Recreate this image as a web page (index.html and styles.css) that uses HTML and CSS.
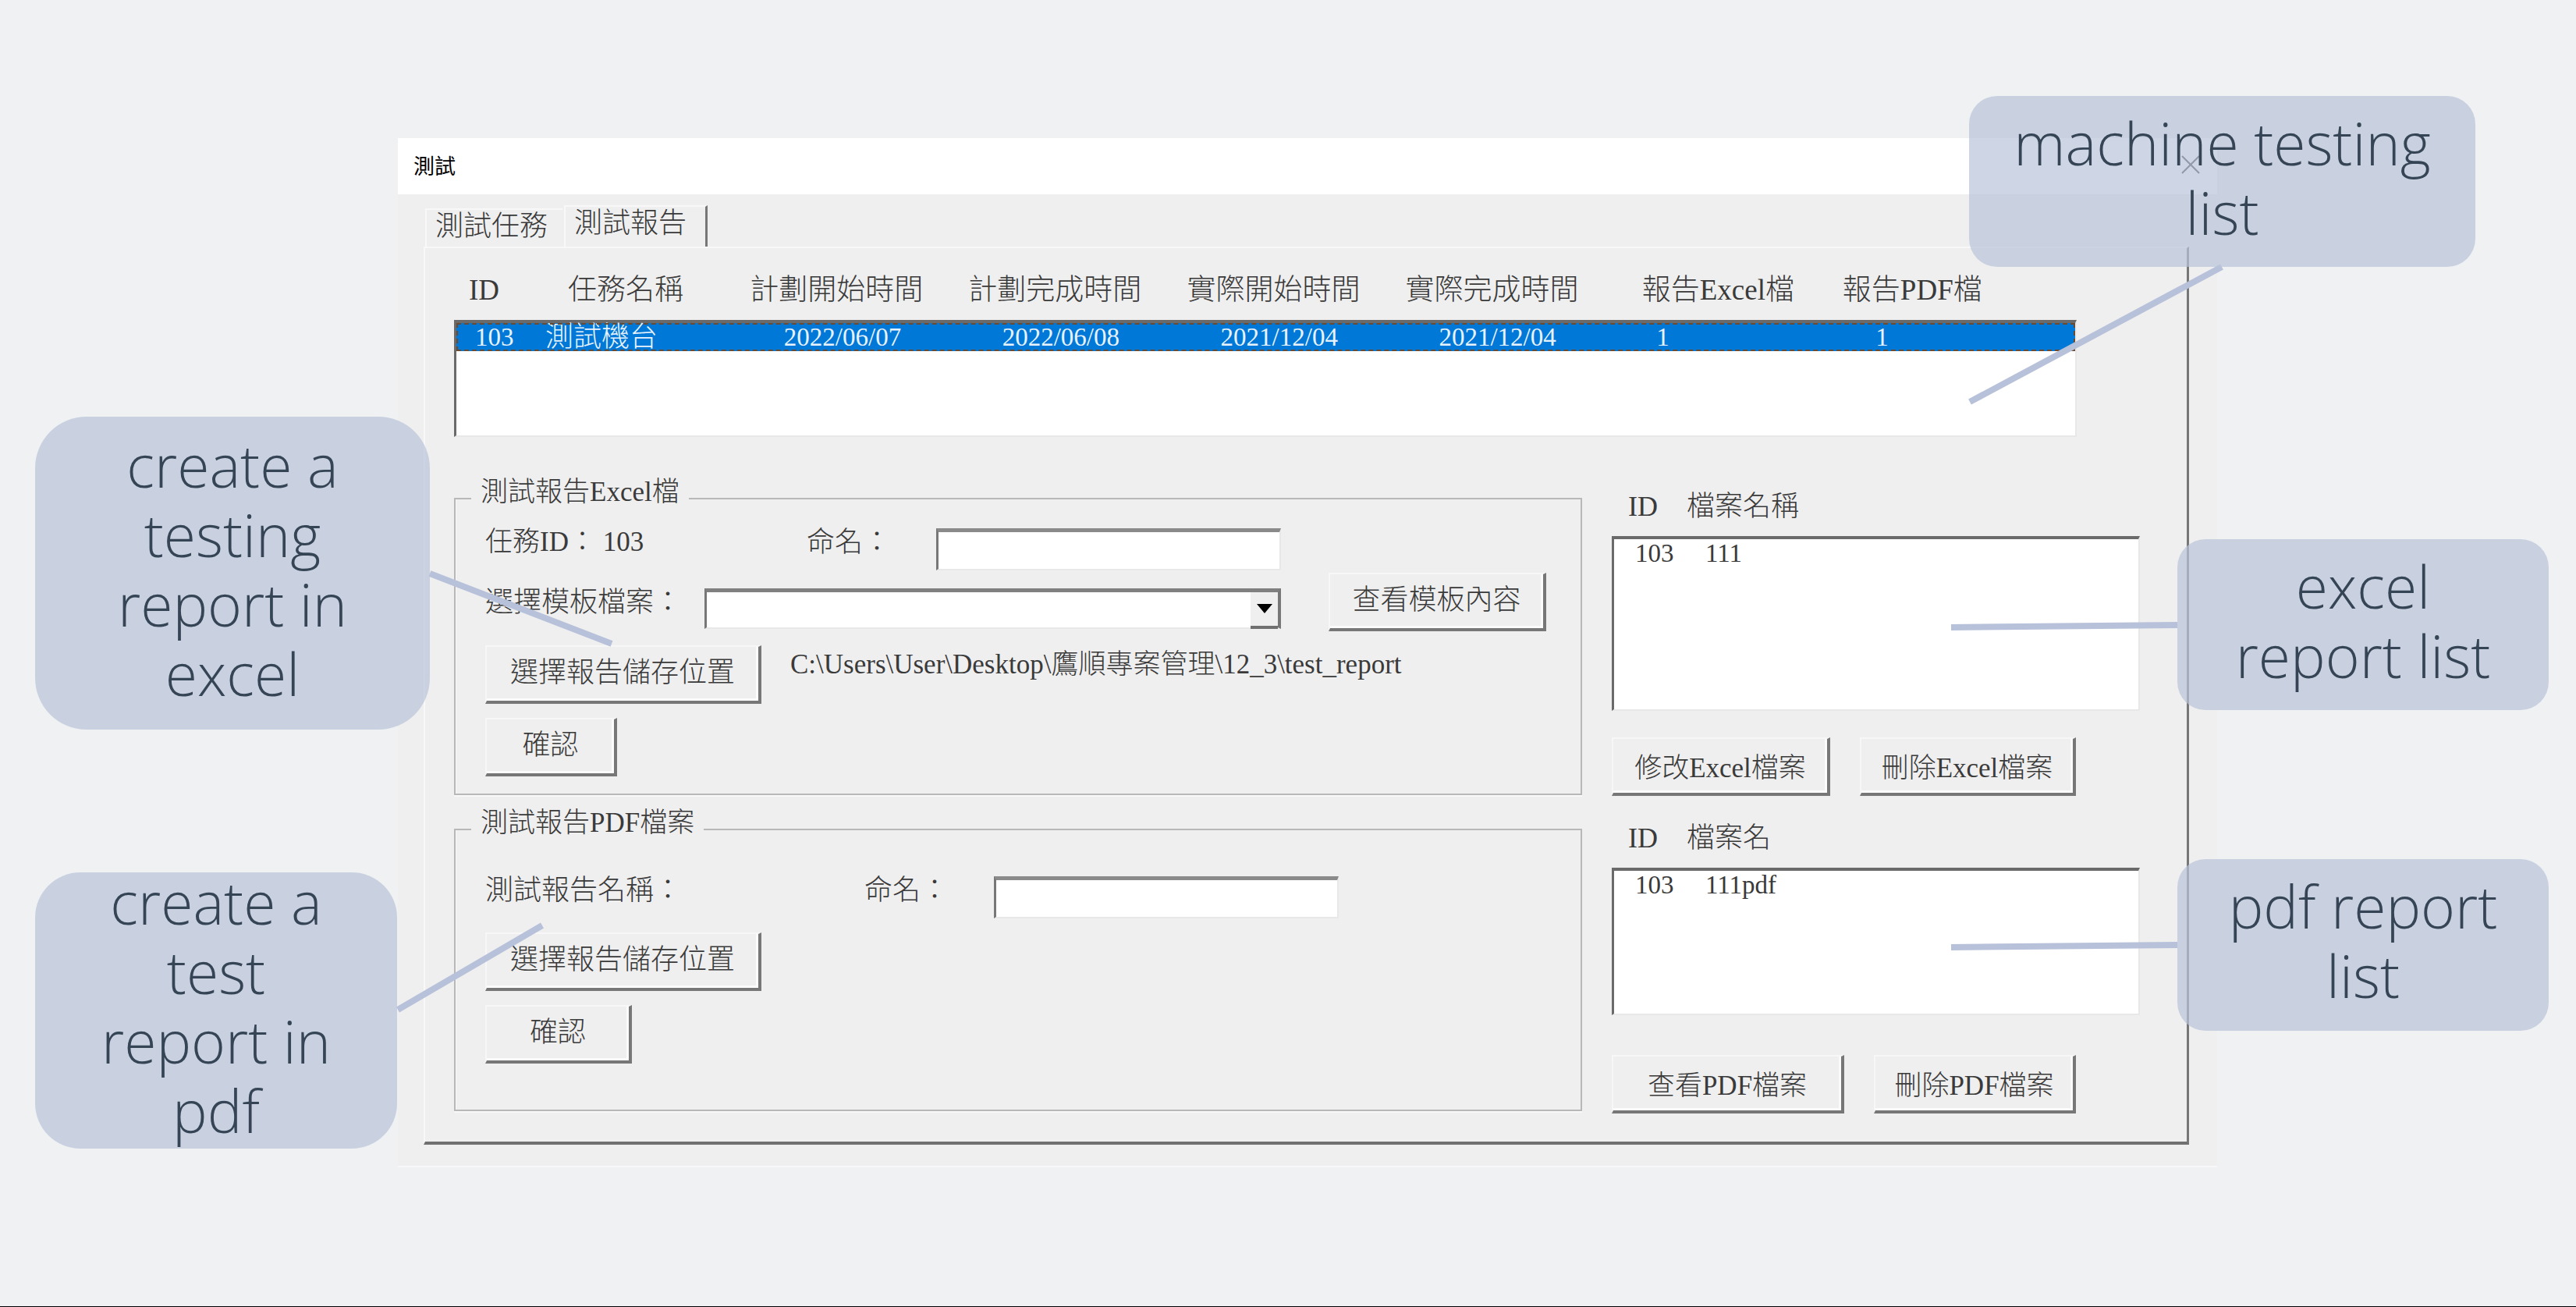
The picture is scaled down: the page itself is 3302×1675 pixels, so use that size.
FILE: index.html
```
<!DOCTYPE html>
<html lang="zh-Hant">
<head>
  <meta charset="UTF-8">
  <meta name="viewport" content="width=device-width, initial-scale=1.0">
  <title>測試</title>
  <link rel="stylesheet" href="styles.css">
</head>
<body>
  <main class="slide">
    <div class="window">
      <header class="titlebar">
        <h1>測試</h1>
        <button class="close" type="button" aria-label="Close">
          <svg width="24" height="24" viewBox="0 0 24 24"><path d="M1 1L23 23M23 1L1 23" /></svg>
        </button>
      </header>

      <div class="window-body">
        <div class="tabs" role="tablist">
          <button class="tab" type="button" role="tab">測試任務</button>
          <button class="tab active" type="button" role="tab" aria-selected="true">測試報告</button>
        </div>

        <div class="panel">
          <table class="list task-list">
            <thead>
              <tr>
                <th>ID</th>
                <th>任務名稱</th>
                <th>計劃開始時間</th>
                <th>計劃完成時間</th>
                <th>實際開始時間</th>
                <th>實際完成時間</th>
                <th>報告Excel檔</th>
                <th>報告PDF檔</th>
              </tr>
            </thead>
            <tbody>
              <tr class="selected">
                <td>103</td>
                <td class="name">測試機台</td>
                <td class="date">2022/06/07</td>
                <td class="date">2022/06/08</td>
                <td class="date">2021/12/04</td>
                <td class="date">2021/12/04</td>
                <td class="count">1</td>
                <td class="date">1</td>
              </tr>
            </tbody>
          </table>

          <div class="columns">
            <div class="forms">
              <fieldset class="group excel-group">
                <legend>測試報告Excel檔</legend>
                <div class="row tight">
                  <span class="task-id">任務ID： 103</span>
                  <label class="name-label" for="excelName">命名：</label>
                  <input class="text" type="text" id="excelName">
                </div>
                <div class="row template-row">
                  <label class="template-label" for="template">選擇模板檔案：</label>
                  <div class="combo">
                    <select id="template"><option></option></select>
                    <span class="arrow"><svg width="20" height="12" viewBox="0 0 20 12"><path d="M0 0H20L10 12Z" /></svg></span>
                  </div>
                  <button class="btn template-btn" type="button">查看模板內容</button>
                </div>
                <div class="row">
                  <button class="btn path-btn" type="button">選擇報告儲存位置</button>
                  <span class="path">C:\Users\User\Desktop\鷹順專案管理\12_3\test_report</span>
                </div>
                <div class="row">
                  <button class="btn ok-btn" type="button">確認</button>
                </div>
              </fieldset>

              <fieldset class="group pdf-group">
                <legend>測試報告PDF檔案</legend>
                <div class="row">
                  <span class="report-name">測試報告名稱：</span>
                  <label class="name-label" for="pdfName">命名：</label>
                  <input class="text" type="text" id="pdfName">
                </div>
                <div class="row">
                  <button class="btn path-btn" type="button">選擇報告儲存位置</button>
                </div>
                <div class="row">
                  <button class="btn ok-btn wide" type="button">確認</button>
                </div>
              </fieldset>
            </div>

            <div class="files">
              <section class="excel-files">
                <table class="list file-list">
                  <thead>
                    <tr><th>ID</th><th>檔案名稱</th></tr>
                  </thead>
                  <tbody>
                    <tr><td>103</td><td>111</td></tr>
                  </tbody>
                </table>
                <div class="actions">
                  <button class="btn mixed" type="button">修改Excel檔案</button>
                  <button class="btn mixed" type="button">刪除Excel檔案</button>
                </div>
              </section>

              <section class="pdf-files">
                <table class="list file-list">
                  <thead>
                    <tr><th>ID</th><th>檔案名</th></tr>
                  </thead>
                  <tbody>
                    <tr><td>103</td><td>111pdf</td></tr>
                  </tbody>
                </table>
                <div class="actions">
                  <button class="btn mixed" type="button">查看PDF檔案</button>
                  <button class="btn mixed" type="button">刪除PDF檔案</button>
                </div>
              </section>
            </div>
          </div>
        </div>
      </div>
    </div>

    <!-- Callouts over the window -->
    <svg class="pointers" width="3302" height="1675" viewBox="0 0 3302 1675" aria-hidden="true">
      <path d="M2848 342L2525 515" />
      <path d="M551 735L784 825" />
      <path d="M510 1294L695 1186" />
      <path d="M2791 801L2501 804" />
      <path d="M2791 1211L2501 1214" />
    </svg>
    <p class="callout callout-list">machine testing<br>list</p>
    <p class="callout callout-excel">create a<br>testing<br>report in<br>excel</p>
    <p class="callout callout-pdf">create a<br>test<br>report in<br>pdf</p>
    <p class="callout callout-excel-list">excel<br>report list</p>
    <p class="callout callout-pdf-list">pdf report<br>list</p>
  </main>
</body>
</html>
```

FILE: styles.css
```
* {
  box-sizing: border-box;
}
body {
  margin: 0;
  background: #eff1f3;
  color: #3a3a3a;
  font-family: "Liberation Serif", "Noto Sans CJK TC", serif;
  font-size: 36px;
  font-weight: 300;
}
button, input, select {
  font: inherit;
  color: inherit;
}
.slide {
  position: relative;
  min-height: 100vh;
  padding: 177px 460px 0 510px;
  border-bottom: 1px solid #000;
  overflow: hidden;
}

/* window frame */
.window {
  background: #efefef;
  border-bottom: 2px solid #f7f7fa;
}
.titlebar {
  display: flex;
  align-items: center;
  justify-content: space-between;
  height: 72px;
  padding: 0 22px 4px 20px;
  background: #fff;
}
.titlebar h1 {
  margin: 0;
  color: #000;
  font-size: 27px;
  font-weight: 400;
}
.close {
  display: flex;
  padding: 0;
  border: none;
  background: none;
}
.close path {
  stroke: #333;
  stroke-width: 2;
}
.window-body {
  padding: 14px 36px 27px 33px;
}

/* tabs */
.tabs {
  display: flex;
  align-items: flex-end;
  gap: 2px;
  padding-left: 2px;
}
.tab {
  width: 176px;
  height: 49px;
  padding: 0 0 6px 11px;
  border: solid #f8f8f8;
  border-width: 2px 0 0 2px;
  background: #efefef;
  line-height: 40px;
  text-align: left;
}
.tab.active {
  width: 184px;
  height: 53px;
  padding-bottom: 10px;
  border-right: 3px solid #777;
}
.panel {
  padding: 0 60px 36px 37px;
  border: 2px solid #f8f8f8;
  border-right: 3px solid #777;
  border-bottom: 4px solid #707070;
}

/* list boxes */
.list {
  display: block;
}
.list tr {
  display: grid;
}
.list th {
  padding: 0;
  font-weight: 300;
  line-height: 48px;
  text-align: left;
  white-space: nowrap;
}
.list thead, .list tbody {
  display: block;
}
.list tbody {
  background: #fff;
  border: solid #e8e8e8;
  border-width: 4px 2px 2px 3px;
  border-top-color: #6a6a6a;
  border-left-color: #6a6a6a;
  font-size: 33px;
}
.list td {
  padding: 0;
  line-height: 36px;
  white-space: nowrap;
}
.task-list {
  margin-right: 81px;
}
.task-list th {
  font-size: 37px;
}
.task-list tr {
  grid-template-columns: 127fr 233fr 280fr 280fr 280fr 303fr 257fr 300fr;
  padding-left: 19px;
}
.task-list thead {
  padding: 30px 0 14px;
}
.task-list tbody {
  height: 150px;
}
.task-list tbody tr {
  padding-left: 16px;
}
.task-list td {
  padding-left: 8px;
}
.task-list .name {
  margin-left: -29px;
  padding-left: 0;
  font-size: 36px;
}
.task-list .date {
  padding-left: 44px;
}
.task-list .count {
  padding-left: 20px;
}
.selected {
  background: #0078d7;
  color: #e8f2fc;
  outline: 2px dashed #6b4a30;
  outline-offset: -2px;
}

/* forms */
.columns {
  display: grid;
  grid-template-columns: minmax(0, 1446fr) minmax(0, 677fr);
  gap: 38px;
  margin-top: 49px;
}
.group {
  margin: 0;
  padding: 8px 38px 22px;
  border: 2px solid #b8b8b8;
  box-shadow: inset 1px 0 #f8f8f8, 0 2px #f8f8f8;
}
.group legend {
  margin-left: -18px;
  padding: 0 12px 16px;
  font-size: 35px;
  line-height: 44px;
}
.pdf-group {
  margin-top: 14px;
  padding-top: 30px;
  padding-bottom: 59px;
}
.row {
  display: flex;
  align-items: flex-start;
  line-height: 36px;
}
.row + .row {
  margin-top: 18px;
}
.row.tight + .row {
  margin-top: 3px;
}
.task-id {
  width: 412px;
  font-size: 35px;
}
.report-name {
  width: 486px;
}
.name-label {
  width: 166px;
}
.text {
  width: 442px;
  height: 54px;
  padding: 0 8px;
  border: solid #e8e8e8;
  border-width: 5px 2px 2px 3px;
  border-top-color: #8a8a8a;
  border-left-color: #777;
  background: #fff;
}
.template-row {
  align-items: center;
}
.template-label {
  width: 281px;
}
.combo {
  position: relative;
  width: 739px;
  margin-top: 16px;
}
.combo select {
  display: block;
  width: 100%;
  height: 52px;
  border: solid #e8e8e8;
  border-width: 5px 4px 2px 3px;
  border-top-color: #808080;
  border-left-color: #777;
  border-right-color: #777;
  border-radius: 0;
  background: #fff;
  appearance: none;
}
.combo .arrow {
  position: absolute;
  top: 5px;
  right: 4px;
  bottom: 0;
  display: flex;
  align-items: center;
  justify-content: center;
  width: 35px;
  border-bottom: 4px solid #707070;
  background: #efefef;
  pointer-events: none;
}
.btn {
  height: 75px;
  padding: 0 0 3px;
  border: solid #f7f7f7;
  border-width: 2px 4px 4px 2px;
  border-right-color: #777;
  border-bottom-color: #777;
  background: #efefef;
  box-shadow: inset -3px -3px #fbfbfb;
}
.btn.mixed {
  font-size: 35px;
}
.template-btn {
  width: 279px;
  margin-left: 61px;
}
.path-btn {
  width: 354px;
}
.ok-btn {
  width: 169px;
}
.ok-btn.wide {
  width: 188px;
}
.path {
  margin-left: 37px;
  font-size: 35px;
  line-height: 50px;
  white-space: nowrap;
}

/* file lists */
.file-list thead {
  padding: 16px 0 14px 21px;
}
.file-list tr {
  grid-template-columns: 75px 1fr;
}
.file-list tbody {
  height: 224px;
}
.file-list tbody tr {
  grid-template-columns: 90px 1fr;
  padding-left: 27px;
}
.pdf-files .file-list tbody {
  height: 189px;
}
.actions {
  display: grid;
  grid-template-columns: 280fr 277fr;
  gap: 38px;
  margin: 34px 82px 14px 0;
}
.pdf-files .actions {
  grid-template-columns: 298fr 259fr;
  margin: 51px 82px 0 0;
}

/* callouts */
.pointers {
  position: absolute;
  top: 0;
  left: 0;
}
.pointers path {
  stroke: #b7c1d9;
  stroke-width: 8;
}
.callout {
  position: absolute;
  display: flex;
  flex-direction: column;
  justify-content: center;
  margin: 0;
  padding-bottom: 10px;
  border-radius: 36px;
  background: rgba(185, 195, 216, 0.7);
  color: #354555;
  font-family: "Open Sans", sans-serif;
  font-size: 75px;
  font-weight: 300;
  line-height: 89px;
  text-align: center;
}
.callout-list {
  top: 123px;
  left: 2524px;
  width: 649px;
  height: 219px;
}
.callout-excel {
  top: 534px;
  left: 45px;
  width: 506px;
  height: 401px;
  border-radius: 66px;
}
.callout-pdf {
  top: 1118px;
  left: 45px;
  width: 464px;
  height: 354px;
  border-radius: 58px;
}
.callout-excel-list {
  top: 691px;
  left: 2791px;
  width: 476px;
  height: 219px;
}
.callout-pdf-list {
  top: 1101px;
  left: 2791px;
  width: 476px;
  height: 220px;
}
```
